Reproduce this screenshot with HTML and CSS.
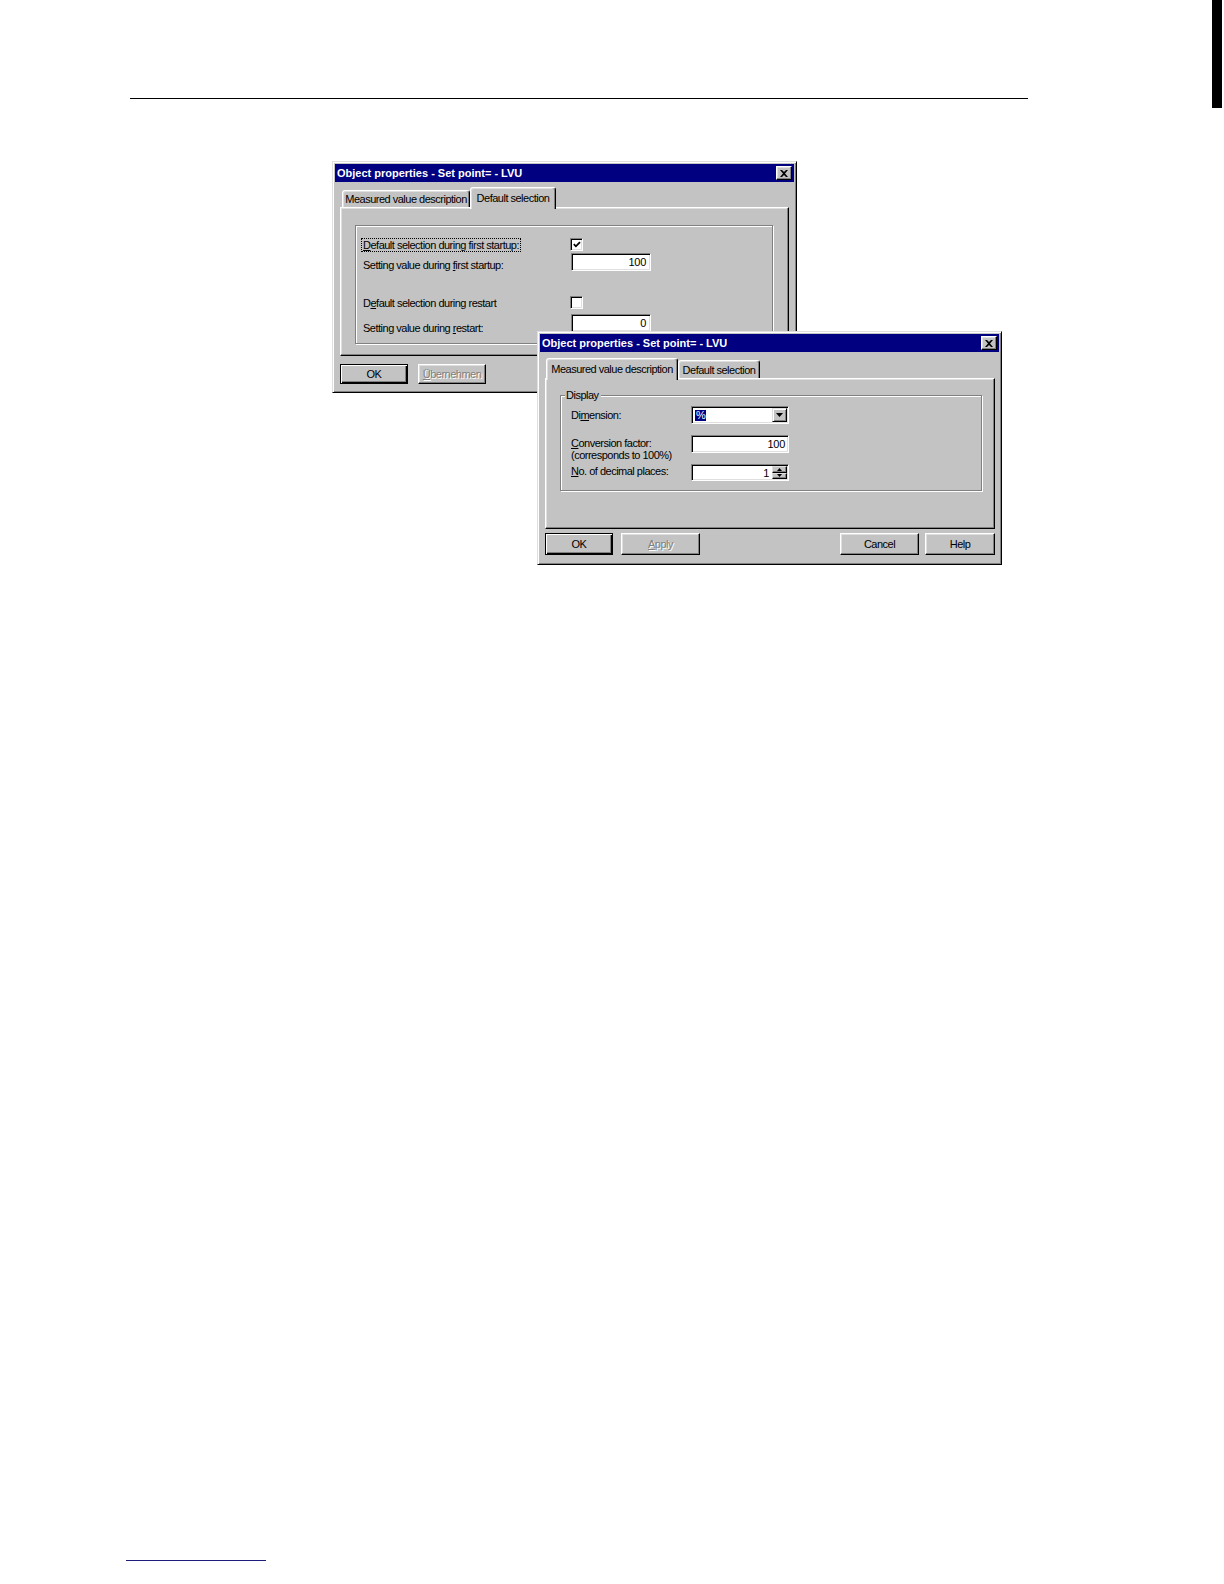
FILE: index.html
```html
<!DOCTYPE html>
<html>
<head>
<meta charset="utf-8">
<title>Object properties</title>
<link rel="stylesheet" href="styles.css">
</head>
<body>
<div class="page">
  <div class="top"><div class="thumb"></div></div>
  <div class="rule"></div>
  <div class="stage">
    <div class="dlg dlg1">
      <div class="titlebar">
        <span class="title">Object properties - Set point= - LVU</span>
        <span class="close"><svg width="8" height="7" viewBox="0 0 8 7"><path d="M0 0h2l2 2 2-2h2L5 3.5 8 7H6L4 5 2 7H0l3-3.5z" fill="#000"/></svg></span>
      </div>
      <div class="dbody">
        <div class="tabs tabs1">
          <div class="tab t1a">Measured value description</div>
          <div class="tab sel t1b">Default selection</div>
        </div>
        <div class="panel p1">
          <div class="group g1">
            <div class="row rA">
              <div class="lbl lblA"><span class="focus"><u>D</u>efault selection during first startup:</span></div>
              <span class="check"><svg width="8" height="7" viewBox="0 0 8 7"><polyline points="0.8,3.2 2.9,5.3 7,1.1" fill="none" stroke="#000" stroke-width="1.8"/></svg></span>
            </div>
            <div class="row rB">
              <div class="lbl lblB">Setting value during <u>f</u>irst startup:</div>
              <div class="field f1">100</div>
            </div>
            <div class="row rC">
              <div class="lbl lblA">D<u>e</u>fault selection during restart</div>
              <span class="check"></span>
            </div>
            <div class="row rD">
              <div class="lbl lblD">Setting value during <u>r</u>estart:</div>
              <div class="field f1">0</div>
            </div>
          </div>
        </div>
        <div class="buttons b1">
          <div class="btn def w68">OK</div>
          <div class="btn dis w68 ml10"><u>Ü</u>bernehmen</div>
        </div>
      </div>
    </div>

    <div class="dlg dlg2">
      <div class="titlebar">
        <span class="title">Object properties - Set point= - LVU</span>
        <span class="close"><svg width="8" height="7" viewBox="0 0 8 7"><path d="M0 0h2l2 2 2-2h2L5 3.5 8 7H6L4 5 2 7H0l3-3.5z" fill="#000"/></svg></span>
      </div>
      <div class="dbody">
        <div class="tabs tabs2">
          <div class="tab sel t2a">Measured value description</div>
          <div class="tab t2b">Default selection</div>
        </div>
        <div class="panel p2">
          <div class="group g2">
            <div class="legend">Display</div>
            <div class="row rDim">
              <div class="lbl2 lblDim">Di<u>m</u>ension:</div>
              <div class="field combo">
                <span class="selv">%</span>
                <span class="arrow"><svg width="7" height="4" viewBox="0 0 7 4"><path d="M0 0h7L3.5 4z" fill="#000"/></svg></span>
              </div>
            </div>
            <div class="row rConv">
              <div class="lbl2 lblConv"><u>C</u>onversion factor:<br>(corresponds to 100%)</div>
              <div class="field f2">100</div>
            </div>
            <div class="row rDec">
              <div class="lbl2 lblDec"><u>N</u>o. of decimal places:</div>
              <div class="field spinf">
                <span class="spinval">1</span>
                <span class="spin">
                  <span class="sbtn"><svg width="5" height="3" viewBox="0 0 5 3"><path d="M0 3h5L2.5 0z" fill="#000"/></svg></span>
                  <span class="sbtn"><svg width="5" height="3" viewBox="0 0 5 3"><path d="M0 0h5L2.5 3z" fill="#000"/></svg></span>
                </span>
              </div>
            </div>
          </div>
        </div>
        <div class="buttons b2">
          <div class="btn def w68">OK</div>
          <div class="btn dis w79 ml8"><u>A</u>pply</div>
          <div class="btn w79 mlauto">Cancel</div>
          <div class="btn w70 ml6">Help</div>
        </div>
      </div>
    </div>
  </div>
  <div class="foot"></div>
</div>
</body>
</html>
```

FILE: styles.css
```css
* { box-sizing: border-box; }

body {
  margin: 0;
  background: #fff;
  font-family: "Liberation Sans", Arial, sans-serif;
}

.page {
  width: 1224px;
  height: 1584px;
  overflow: hidden;
}

.top {
  height: 98px;
  display: flex;
  justify-content: flex-end;
  padding-right: 2px;
}

.thumb {
  flex: none;
  width: 10px;
  height: 108px;
  background: #000;
}

.rule {
  margin-left: 130px;
  width: 898px;
  border-top: 1px solid #000;
}

.stage {
  position: relative;
  margin-top: 62px;
  height: 404px;
}

.foot {
  margin-top: 995px;
  margin-left: 126px;
  width: 140px;
  border-top: 1px solid #1c1c7c;
}

/* window */
.dlg {
  width: 465px;
  background: #c3c3c3;
  border: 1px solid;
  border-color: #dfdfdf #000 #000 #dfdfdf;
  box-shadow: inset 1px 1px 0 #fff, inset -1px -1px 0 #808080;
  padding: 2px;
  font-size: 11px;
  letter-spacing: -0.5px;
  color: #000;
}

.dlg1 {
  margin-left: 332px;
  height: 232px;
}

.dlg2 {
  position: absolute;
  left: 537px;
  top: 170px;
  height: 234px;
}

.titlebar {
  height: 18px;
  background: #000080;
  display: flex;
  align-items: center;
  justify-content: space-between;
  padding: 0 2px;
}

.title {
  color: #fff;
  font-weight: bold;
  letter-spacing: 0;
  white-space: nowrap;
}

.close {
  width: 16px;
  height: 14px;
  background: #c3c3c3;
  border: 1px solid;
  border-color: #fff #000 #000 #fff;
  box-shadow: inset -1px -1px 0 #808080, inset 1px 1px 0 #dfdfdf;
  display: flex;
  align-items: center;
  justify-content: center;
}

.close svg { display: block; }

.dbody {
  padding: 0 4px 0 5px;
}

/* tabs */
.tabs {
  display: flex;
  align-items: flex-end;
  height: 20px;
}

.tabs1 { margin-top: 5px; padding-left: 2px; }
.tabs2 { margin-top: 6px; padding-left: 1px; }

.tab {
  height: 17px;
  background: #c3c3c3;
  border: 1px solid;
  border-bottom: none;
  border-color: #fff #000 transparent #fff;
  border-radius: 3px 3px 0 0;
  box-shadow: inset -1px 0 0 #808080, inset 1px 1px 0 #dfdfdf;
  display: flex;
  align-items: center;
  justify-content: center;
  white-space: nowrap;
}

.tab.sel {
  height: 22px;
  margin-bottom: -2px;
  padding-bottom: 2px;
  position: relative;
  z-index: 1;
}

.t1a { width: 128px; }
.t1b { width: 86px; }
.t2a { width: 132px; }
.t2b { width: 82px; height: 18px; }

/* panel */
.panel {
  border: 1px solid;
  border-color: #fff #000 #000 #fff;
  box-shadow: inset -1px -1px 0 #808080, inset 1px 1px 0 #dfdfdf;
}

.p1 {
  width: 449px;
  height: 149px;
  padding: 17px 0 0 14px;
}

.p2 {
  width: 450px;
  height: 151px;
  padding: 16px 0 0 14px;
}

.group {
  border: 1px solid #808080;
  box-shadow: inset 1px 1px 0 #fff, 1px 1px 0 #fff;
}

.g1 {
  width: 418px;
  height: 119px;
  padding: 11px 0 0 7px;
}

.g2 {
  width: 422px;
  height: 96px;
  padding: 0 0 0 10px;
}

.legend {
  width: max-content;
  margin: -7px 0 0 -6px;
  padding: 0 2px 0 1px;
  line-height: 12px;
  background: #c3c3c3;
}

.row {
  display: flex;
  align-items: flex-start;
}

.lbl {
  width: 207px;
  white-space: nowrap;
  line-height: 14px;
}

.lblA { margin-top: 1px; }
.lblB { margin-top: 5px; }
.lblD { margin-top: 7px; }

.rA { height: 16px; }
.rB { height: 19px; }
.rC { height: 16px; margin-top: 23px; }
.rD { height: 18px; margin-top: 3px; }

.focus {
  outline: 1px dotted #000;
  padding: 0 1px;
  margin-left: -1px;
}

.check {
  width: 13px;
  height: 13px;
  margin-top: 1px;
  background: #fff;
  border: 1px solid;
  border-color: #808080 #fff #fff #808080;
  box-shadow: inset 1px 1px 0 #000, inset -1px -1px 0 #dfdfdf;
  display: flex;
  align-items: center;
  justify-content: center;
}

.check svg { display: block; }

.field {
  background: #fff;
  border: 1px solid;
  border-color: #808080 #fff #fff #808080;
  box-shadow: inset 1px 1px 0 #000, inset -1px -1px 0 #dfdfdf;
  display: flex;
  align-items: center;
  justify-content: flex-end;
  padding-right: 4px;
  letter-spacing: -0.3px;
}

.f1 {
  width: 80px;
  height: 18px;
  margin-left: 1px;
}

.lbl2 {
  width: 120px;
  white-space: nowrap;
}

.rDim { margin-top: 5px; height: 18px; }
.rConv { margin-top: 11px; height: 26px; }
.rDec { margin-top: 3px; height: 17px; }

.lblDim { line-height: 18px; }
.lblConv { line-height: 12px; margin-top: 2px; }
.lblDec { line-height: 15px; }

.combo {
  width: 98px;
  height: 18px;
  justify-content: space-between;
  padding: 2px 1px 2px 2px;
}

.selv {
  background: #000080;
  color: #fff;
  line-height: 11px;
  padding: 0 1px;
  margin-left: 1px;
}

.arrow {
  width: 15px;
  height: 14px;
  background: #c3c3c3;
  border: 1px solid;
  border-color: #dfdfdf #000 #000 #dfdfdf;
  box-shadow: inset 1px 1px 0 #fff, inset -1px -1px 0 #808080;
  display: flex;
  align-items: center;
  justify-content: center;
}

.arrow svg, .sbtn svg { display: block; }

.f2 {
  width: 98px;
  height: 18px;
  padding-right: 3px;
}

.spinf {
  width: 98px;
  height: 17px;
  padding: 2px 1px 2px 2px;
}

.spinval { margin-right: 3px; }

.spin {
  width: 15px;
  height: 13px;
  display: flex;
  flex-direction: column;
}

.sbtn {
  flex: 1;
  background: #c3c3c3;
  border: 1px solid;
  border-color: #dfdfdf #000 #000 #dfdfdf;
  box-shadow: inset -1px -1px 0 #808080;
  display: flex;
  align-items: center;
  justify-content: center;
}

/* buttons */
.buttons {
  display: flex;
}

.b1 { margin-top: 8px; }
.b2 { margin-top: 4px; width: 450px; }

.btn {
  height: 20px;
  background: #c3c3c3;
  border: 1px solid;
  border-color: #fff #000 #000 #fff;
  box-shadow: inset -1px -1px 0 #808080, inset 1px 1px 0 #dfdfdf;
  display: flex;
  align-items: center;
  justify-content: center;
  white-space: nowrap;
}

.b2 .btn { height: 22px; }

.btn.def {
  border-color: #000;
  box-shadow: inset 1px 1px 0 #fff, inset -1px -1px 0 #000, inset -2px -2px 0 #808080;
}

.btn.dis {
  color: #808080;
  text-shadow: 1px 1px 0 #fff;
}

.w68 { width: 68px; }
.w70 { width: 70px; }
.w79 { width: 79px; }
.ml6 { margin-left: 6px; }
.ml8 { margin-left: 8px; }
.ml10 { margin-left: 10px; }
.mlauto { margin-left: auto; }
```
